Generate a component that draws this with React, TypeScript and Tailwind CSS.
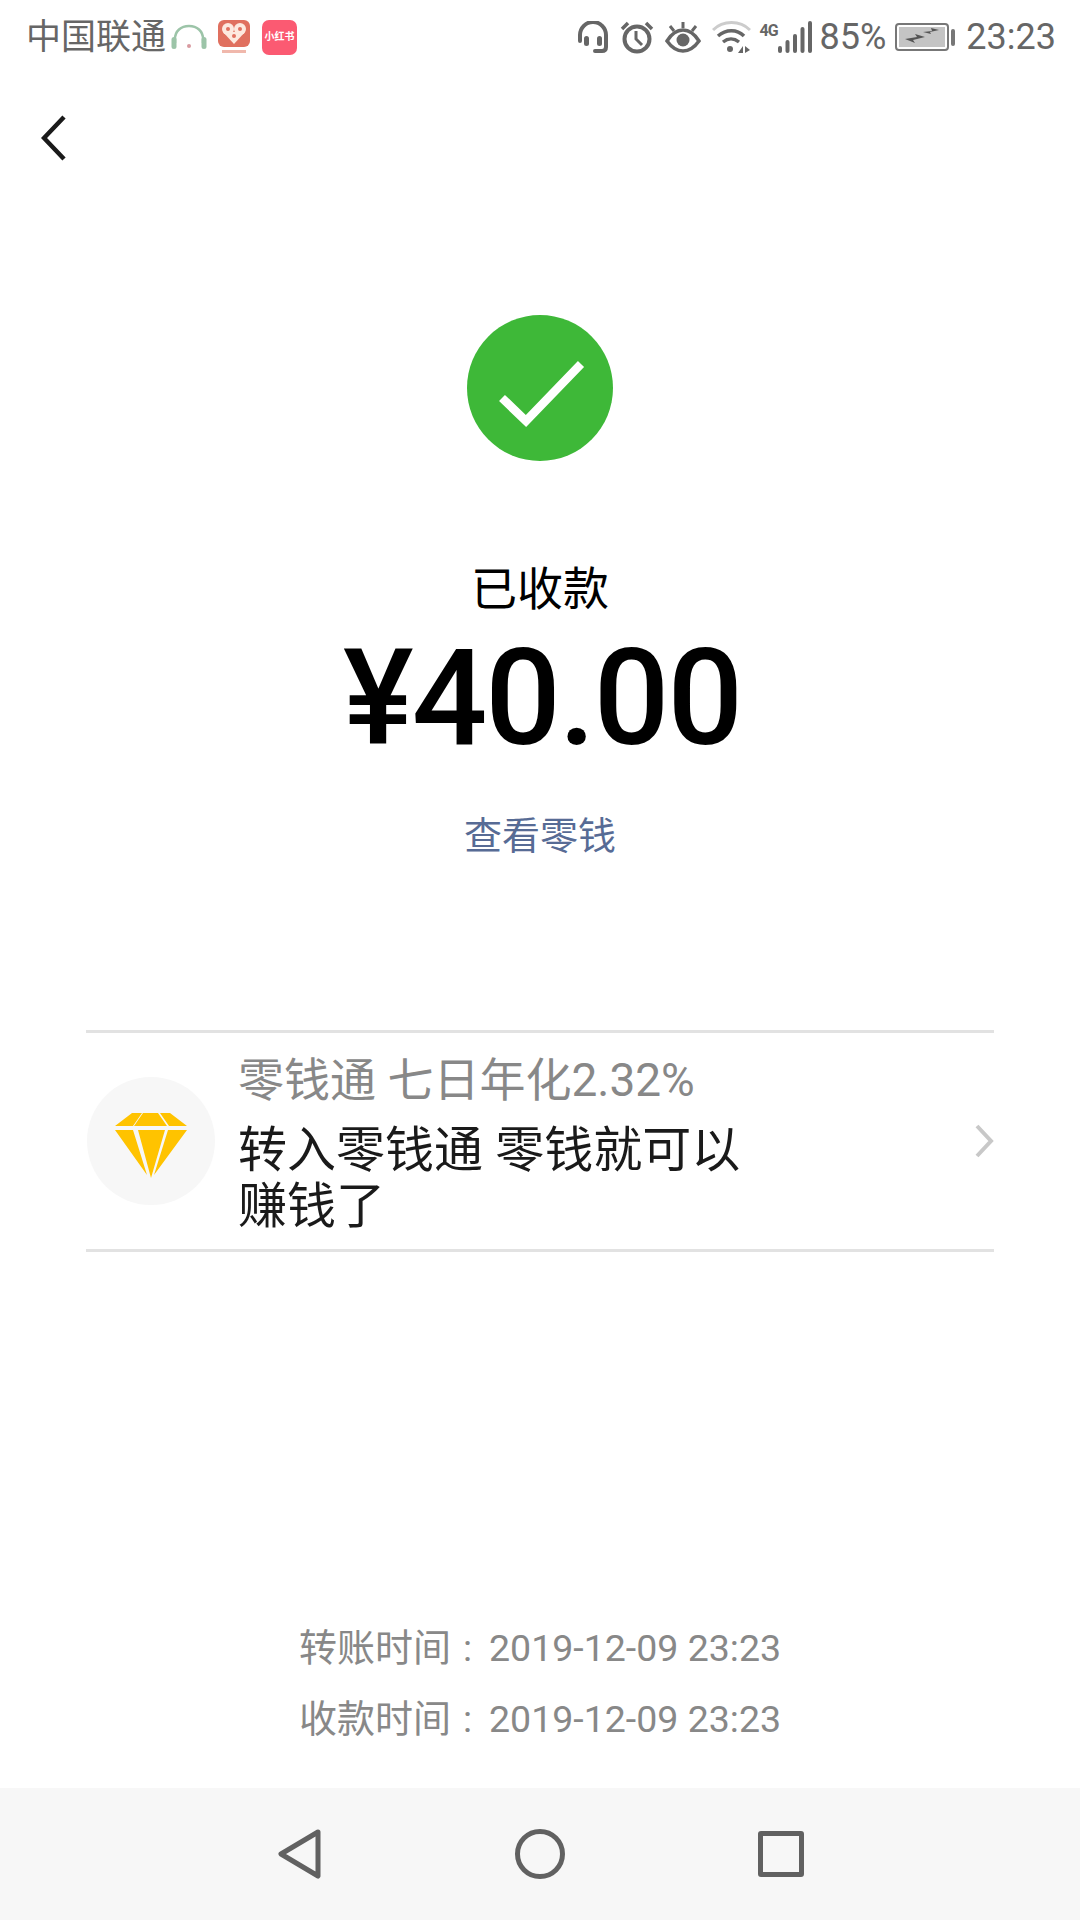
const font = { fontFamily: 'Roboto, "Noto Sans CJK SC", sans-serif' };

function StatusBar() {
  return (
    <div className="flex h-[74px] w-full items-center pl-[26px] pr-[24px] text-[#666666]">
      <span className="text-[35px] leading-none">中国联通</span>
      <svg className="ml-[5px]" width="36" height="28" viewBox="0 0 36 28">
        <path d="M4 20V16C4 8 10 3 18 3s14 5 14 13v4" fill="none" stroke="#9cc4a8" strokeWidth="2.5" />
        <rect x="0.5" y="14" width="5" height="12" rx="2.5" fill="#9cc4a8" />
        <rect x="30.5" y="14" width="5" height="12" rx="2.5" fill="#9cc4a8" />
        <circle cx="18" cy="23" r="2" fill="#d99aa0" />
      </svg>
      <div className="relative ml-[11px] flex h-[34px] w-[32px] flex-col items-center">
        <svg width="32" height="27" viewBox="0 0 32 27">
          <rect width="32" height="27" rx="6" fill="#e0705f" />
          <circle cx="10" cy="9" r="6" fill="#fde9df" />
          <circle cx="22" cy="9" r="6" fill="#fde9df" />
          <path d="M5 12h22l-11 12z" fill="#fde9df" />
          <circle cx="10" cy="9" r="2" fill="#e0705f" />
          <circle cx="22" cy="9" r="2" fill="#e0705f" />
          <circle cx="16" cy="16" r="2" fill="#e0705f" />
        </svg>
        <div className="mt-[3px] h-[3px] w-[24px] bg-[#f0b8ac]" />
      </div>
      <div className="ml-[12px] flex h-[35px] w-[35px] items-center justify-center rounded-[7px] bg-[#fb5a72] text-[10px] font-bold leading-none text-white">
        小红书
      </div>
      <div className="flex-1" />
      <svg width="32" height="33" viewBox="0 0 32 33">
        <path d="M3 20V14a13 13 0 0 1 26 0v12c0 3-2 4-4 4h-7" fill="none" stroke="#666" strokeWidth="4" strokeLinecap="round" />
        <rect x="7" y="15" width="5" height="10" rx="2.5" fill="#666" />
        <rect x="20" y="15" width="5" height="10" rx="2.5" fill="#666" />
      </svg>
      <svg className="ml-[11px]" width="34" height="33" viewBox="0 0 34 33">
        <circle cx="17" cy="18" r="12.5" fill="none" stroke="#666" strokeWidth="4" />
        <path d="M16 10v8l6 6" fill="none" stroke="#666" strokeWidth="3" />
        <path d="M2 8l6-6M32 8l-6-6" fill="none" stroke="#666" strokeWidth="3.5" />
      </svg>
      <svg className="ml-[11px]" width="36" height="31" viewBox="0 0 36 31">
        <path d="M2 19C7 11 12 8 18 8s11 3 16 11c-5 7-10 10-16 10S7 26 2 19z" fill="none" stroke="#666" strokeWidth="3.5" />
        <circle cx="18" cy="18" r="6.5" fill="#666" />
        <path d="M18 0v6M5 4l4 5M31 4l-4 5" fill="none" stroke="#666" strokeWidth="3" />
      </svg>
      <svg className="ml-[11px]" width="39" height="33" viewBox="0 0 39 33">
        <path d="M1 9C11 -1 28 -1 38 9" fill="none" stroke="#cccccc" strokeWidth="3" />
        <path d="M6 15C14 8 25 8 32 15M11 21c5-4 11-4 16 0" fill="none" stroke="#666" strokeWidth="3.5" />
        <circle cx="18" cy="28" r="3" fill="#666" />
        <path d="M26 32l5-7v7zM33 25l5 4-5 3z" fill="#666" />
      </svg>
      <div className="ml-[9px] flex items-end">
        <span className="mb-[15px] w-[18px] text-[16px] font-bold leading-none tracking-[-1px]">4G</span>
        <svg width="35" height="33" viewBox="0 0 35 33">
          <rect x="0" y="25" width="4" height="7" rx="2" fill="#666" />
          <rect x="7.5" y="19" width="4" height="13" rx="2" fill="#666" />
          <rect x="15" y="13" width="4" height="19" rx="2" fill="#666" />
          <rect x="22.5" y="6" width="4" height="26" rx="2" fill="#666" />
          <rect x="30" y="0" width="4" height="32" rx="2" fill="#666" />
        </svg>
      </div>
      <span className="ml-[7px] text-[36px] leading-none">85%</span>
      <svg className="ml-[9px]" width="61" height="28" viewBox="0 0 61 28">
        <rect x="1" y="1" width="52" height="26" rx="3" fill="none" stroke="#777" strokeWidth="2" />
        <rect x="4" y="4" width="46" height="20" fill="#c4c4c4" />
        <path d="M10 16l12-2-2-3 10 3-12 3 2 3zM28 9l9-1-1-3 8 2-9 2 1 2z" fill="#555" />
        <rect x="56" y="6" width="4" height="17" rx="2" fill="#777" />
      </svg>
      <span className="ml-[10px] text-[36px] leading-none">23:23</span>
    </div>
  );
}

export default function App() {
  return (
    <div className="flex h-[1920px] w-[1080px] flex-col bg-white" style={font}>
      <StatusBar />
      <div className="mt-[41px] pl-[41px]">
        <svg width="25" height="46" viewBox="0 0 25 46" className="block">
          <path d="M23 2L3 23l20 21" fill="none" stroke="#1a1a1a" strokeWidth="4.5" />
        </svg>
      </div>
      <div className="mt-[154px] flex flex-col items-center">
        <div className="flex h-[146px] w-[146px] items-center justify-center rounded-full bg-[#3eb838]">
          <svg width="146" height="146" viewBox="0 0 146 146">
            <path d="M35 83l24 23 55-57" fill="none" stroke="#ffffff" strokeWidth="8.5" />
          </svg>
        </div>
        <div className="mt-[102px] text-[46px] leading-[52px] text-black">已收款</div>
        <div className="ml-[4px] mt-[19px] text-[133px] font-medium leading-[130px] tracking-[-2px] text-black">¥40.00</div>
        <div className="mt-[50px] text-[38px] leading-[44px] text-[#576b95]">查看零钱</div>
      </div>
      <div className="mx-[86px] mt-[172px] flex h-[222px] items-center border-y-[3px] border-[#e2e2e2]">
        <div className="ml-[1px] flex h-[128px] w-[128px] shrink-0 items-center justify-center rounded-full bg-[#f7f7f7]">
          <svg className="mt-[8px]" width="72" height="65" viewBox="0 0 72 65">
            <path d="M0 13L17 0h10L18 13zM19 13L28 0h15l9 13zM45 0h10l17 13H54zM0 17h18l14 45zM23 17h27L36 65zM53 17h19L39 62z" fill="#ffc300" />
          </svg>
        </div>
        <div className="ml-[23px] w-[510px] pt-[6px]">
          <div className="text-[46px] leading-[52px] text-[#888888]">零钱通 七日年化2.32%</div>
          <div className="mt-[17px] text-[49px] leading-[56px] text-[#1a1a1a]">转入零钱通 零钱就可以赚钱了</div>
        </div>
        <div className="flex-1" />
        <svg width="20" height="36" viewBox="0 0 20 36" className="block">
          <path d="M3 3l14 15L3 33" fill="none" stroke="#c8c8c8" strokeWidth="4" />
        </svg>
      </div>
      <div className="flex-1" />
      <div className="flex flex-col items-center gap-[29px] text-[37.5px] leading-[42px] text-[#888888]">
        <div className="flex">
          <span className="text-[38px]">转账时间</span>
          <span className="ml-[12px] mr-[17px]">:</span>
          <span>2019-12-09 23:23</span>
        </div>
        <div className="flex">
          <span className="text-[38px]">收款时间</span>
          <span className="ml-[12px] mr-[17px]">:</span>
          <span>2019-12-09 23:23</span>
        </div>
      </div>
      <div className="mt-[48px] flex h-[132px] items-center justify-center bg-[#f7f7f7]">
        <svg width="46" height="52" viewBox="0 0 46 52">
          <path d="M41 4L4 26l37 22z" fill="none" stroke="#616161" strokeWidth="5" strokeLinejoin="round" />
        </svg>
        <div className="ml-[192px] h-[50px] w-[50px] rounded-full border-[5px] border-[#616161]" />
        <div className="ml-[193px] h-[46px] w-[46px] rounded-[3px] border-[5px] border-[#616161]" />
      </div>
    </div>
  );
}
